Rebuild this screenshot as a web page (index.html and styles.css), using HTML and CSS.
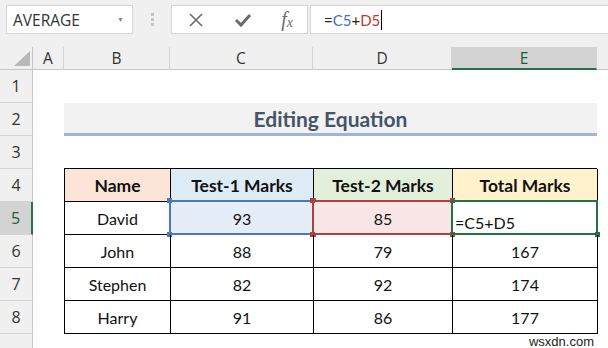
FILE: index.html
```html
<!DOCTYPE html>
<html lang="en">
<head>
    <meta charset="UTF-8">
    <title>Editing Equation</title>
    <link rel="stylesheet" href="styles.css">
</head>
<body>

<div class="formula-bar">
    <div class="name-box">
        <span>AVERAGE</span>
        <span class="drop">&#9660;</span>
    </div>
    <div class="grip"><i></i><i></i><i></i></div>
    <div class="fx-box">
        <svg width="16" height="16" viewBox="0 0 16 16"><path d="M2 2 L14 14 M14 2 L2 14" stroke="#6b6b6b" stroke-width="1.6" fill="none"/></svg>
        <svg width="18" height="16" viewBox="0 0 18 16"><path d="M2 8 L7 13 L16 3" stroke="#6b6b6b" stroke-width="3" fill="none"/></svg>
        <span class="fx">f<sub>x</sub></span>
    </div>
    <div class="input-box">
        <span>=</span><span class="ref-c">C5</span><span>+</span><span class="ref-d">D5</span><span class="caret"></span>
    </div>
</div>

<div class="sheet">
    <div class="corner"><span class="tri"></span></div>
    <div class="col-head">A</div>
    <div class="col-head">B</div>
    <div class="col-head">C</div>
    <div class="col-head">D</div>
    <div class="col-head active">E</div>
    <div class="col-head last"></div>

    <div class="row-head r1">1</div>
    <div class="row-head r2">2</div>
    <div class="row-head r3">3</div>
    <div class="row-head r4">4</div>
    <div class="row-head r5 active">5</div>
    <div class="row-head r6">6</div>
    <div class="row-head r7">7</div>
    <div class="row-head r8">8</div>
    <div class="row-head r9"></div>

    <div class="title">Editing Equation</div>

    <div class="marks">
        <div class="cell head name">Name</div>
        <div class="cell head t1">Test-1 Marks</div>
        <div class="cell head t2">Test-2 Marks</div>
        <div class="cell head total">Total Marks</div>

        <div class="cell">David</div>
        <div class="cell ref blue">93<span class="sel"><b class="tl"></b><b class="tr"></b><b class="bl"></b><b class="br"></b></span></div>
        <div class="cell ref red">85<span class="sel"><b class="tl"></b><b class="tr"></b><b class="bl"></b><b class="br"></b></span></div>
        <div class="cell ref editing">=C5+D5<span class="sel"><b class="br"></b></span></div>

        <div class="cell">John</div>
        <div class="cell">88</div>
        <div class="cell">79</div>
        <div class="cell">167</div>

        <div class="cell">Stephen</div>
        <div class="cell">82</div>
        <div class="cell">92</div>
        <div class="cell">174</div>

        <div class="cell">Harry</div>
        <div class="cell">91</div>
        <div class="cell">86</div>
        <div class="cell">177</div>
    </div>

    <div class="watermark">wsxdn.com</div>
</div>

</body>
</html>
```

FILE: styles.css
```css
* {
    box-sizing: border-box;
}

body {
    margin: 0;
    width: 608px;
    height: 348px;
    overflow: hidden;
    background: #ffffff;
    font-family: 'Open Sans', 'Noto Sans', sans-serif;
}

/* --- Formula bar --- */
.formula-bar {
    display: flex;
    align-items: center;
    height: 47px;
    padding: 0 0 8px 6px;
    background: #f0f0f0;
}

.name-box {
    display: flex;
    align-items: center;
    justify-content: space-between;
    width: 127px;
    height: 29px;
    padding: 0 8px 0 6px;
    background: #ffffff;
    border: 1px solid #d5d5d5;
    font-size: 15.5px;
    color: #333;
}

.name-box .drop {
    font-size: 7px;
    color: #8a8a8a;
}

.grip {
    display: flex;
    flex-direction: column;
    gap: 2px;
    width: 38px;
    align-items: center;
}

.grip i {
    width: 3px;
    height: 3px;
    background: #c4c4c4;
}

.fx-box {
    display: flex;
    align-items: center;
    justify-content: space-between;
    width: 137px;
    height: 29px;
    padding: 0 14px 0 16px;
    background: #ffffff;
    border: 1px solid #d5d5d5;
}

.fx {
    font-family: 'Liberation Serif', serif;
    font-style: italic;
    font-size: 20px;
    color: #6b6b6b;
    line-height: 1;
}

.fx sub {
    font-size: 14px;
    vertical-align: -1px;
}

.input-box {
    display: flex;
    align-items: center;
    flex: 1;
    height: 29px;
    margin-left: 2px;
    padding-left: 13px;
    background: #ffffff;
    border: 1px solid #d5d5d5;
    border-right: none;
    font-family: 'Lato', sans-serif;
    font-size: 15px;
    color: #222;
}

.ref-c {
    color: #3f6fc0;
}

.ref-d {
    color: #c0392b;
}

.caret {
    width: 1px;
    height: 20px;
    margin-left: 1px;
    background: #000;
}

/* --- Sheet grid --- */
.sheet {
    display: grid;
    grid-template-columns: 33px 31px 106px 143px 139px 145px 1fr;
    grid-template-rows: 23px repeat(8, 33px) 1fr;
    height: 301px;
    position: relative;
}

.corner {
    display: flex;
    align-items: flex-end;
    justify-content: flex-end;
    padding: 0 2px 3px 0;
    background: #f0f0f0;
    border-right: 1px solid #c6c6c6;
    border-bottom: 1px solid #c6c6c6;
}

.tri {
    width: 0;
    height: 0;
    border-left: 16px solid transparent;
    border-bottom: 15px solid #b8b8b8;
}

.col-head {
    display: flex;
    align-items: center;
    justify-content: center;
    background: #f0f0f0;
    border-right: 1px solid #d4d4d4;
    border-bottom: 1px solid #c6c6c6;
    font-size: 15.5px;
    color: #333;
}

.col-head.active {
    background: #d3d3d3;
    border-bottom: 2px solid #217346;
    color: #1c5c38;
}

.col-head.last {
    border-right: none;
}

.row-head {
    grid-column: 1;
    display: flex;
    align-items: center;
    justify-content: center;
    background: #f0f0f0;
    border-right: 1px solid #c6c6c6;
    border-bottom: 1px solid #d4d4d4;
    font-size: 16px;
    color: #333;
}

.row-head.active {
    background: #d3d3d3;
    border-right: 2px solid #217346;
    color: #1c5c38;
}

.r9 {
    border-bottom: none;
}

.title {
    grid-column: 3 / 7;
    grid-row: 3;
    display: flex;
    align-items: center;
    justify-content: center;
    background: #f2f2f2;
    border-bottom: 3px solid #9fb3dc;
    padding-top: 1px;
    font-family: 'Lato', sans-serif;
    font-weight: bold;
    font-size: 21px;
    color: #44546a;
}

/* --- Marks table --- */
.marks {
    grid-column: 3 / 7;
    grid-row: 5 / 10;
    display: grid;
    grid-template-columns: 106px 143px 139px 145px;
    grid-template-rows: repeat(5, 33px);
    border-left: 1px solid #000;
    border-top: 1px solid #000;
    margin-top: -1px;
    height: 166px;
}

.cell {
    display: flex;
    align-items: center;
    justify-content: center;
    border-right: 1px solid #000;
    border-bottom: 1px solid #000;
    font-family: 'Lato', sans-serif;
    font-size: 16px;
    color: #111;
    position: relative;
}

.cell.head {
    font-weight: bold;
    font-size: 17.5px;
}

.name { background: #fce4d6; }
.t1 { background: #ddebf7; }
.t2 { background: #e2efda; }
.total { background: #fff2cc; }

.blue { background: #e4edf8; }
.red { background: #f8e6e6; }

.editing {
    justify-content: flex-start;
    padding: 8px 0 0 2px;
}

/* reference highlight frames drawn over the cells */
.sel {
    position: absolute;
    left: -2px;
    top: -2px;
    right: -1px;
    bottom: -1px;
    border: 2px solid;
}

.blue .sel { border-color: #4a78b8; }
.red .sel { border-color: #b04040; }
.editing .sel { border-color: #217346; }

.sel b {
    position: absolute;
    width: 5px;
    height: 5px;
}

.blue .sel b { background: #4a78b8; }
.red .sel b { background: #b04040; }
.editing .sel b { background: #217346; }

.sel .tl { left: -4px; top: -4px; }
.sel .tr { right: -4px; top: -4px; }
.sel .bl { left: -4px; bottom: -4px; }
.sel .br { right: -4px; bottom: -4px; }

.watermark {
    position: absolute;
    right: 12px;
    bottom: -1px;
    font-family: 'Liberation Sans', sans-serif;
    font-size: 13px;
    color: #222;
    background: #fff;
    padding: 0 2px;
}
```
